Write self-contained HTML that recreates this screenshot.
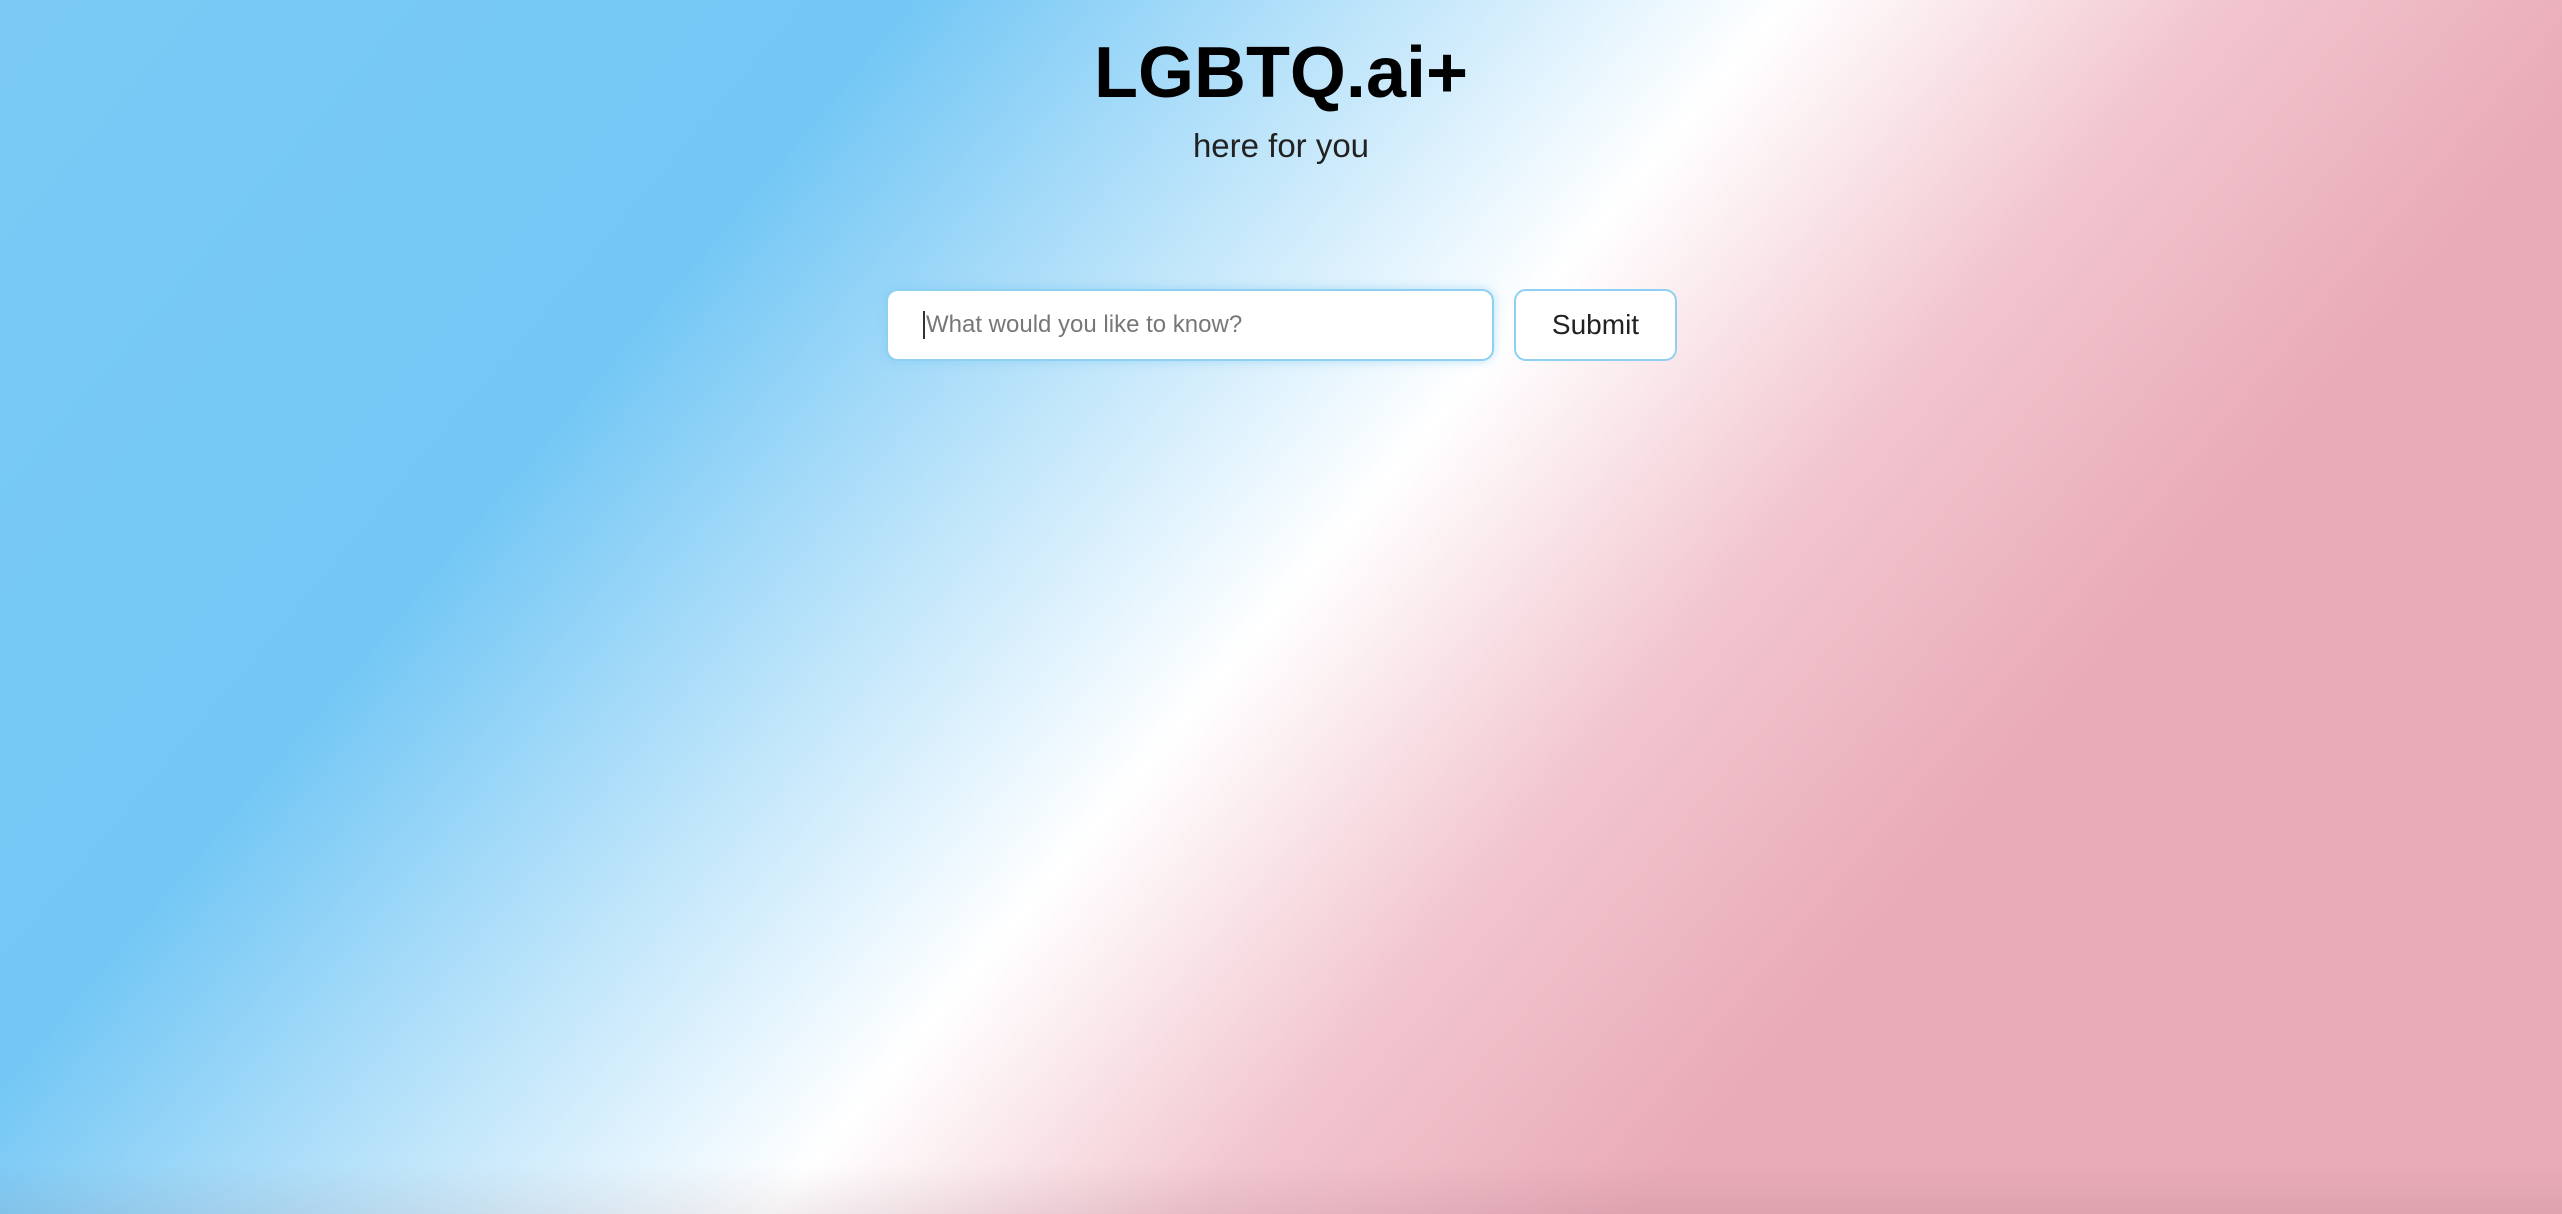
<!DOCTYPE html>
<html><head><meta charset="utf-8"><style>
html,body{margin:0;padding:0;width:2562px;height:1214px;overflow:hidden}
body{background:linear-gradient(130deg,#7acaf5 0%,#74c7f5 25.5%,#ffffff 50%,#f2c6cf 62%,#e9abb8 74%,#e9abb8 100%);font-family:"Liberation Sans",Arial,sans-serif;position:relative}
.shade{position:absolute;left:0;right:0;bottom:0;height:50px;background:linear-gradient(to bottom,rgba(0,0,0,0),rgba(80,40,60,0.07))}
h1{position:absolute;top:28px;left:0;width:2562px;text-align:center;margin:0;font-size:72px;font-weight:bold;color:#000;line-height:90px}
.sub{position:absolute;top:124px;left:0;width:2562px;text-align:center;font-size:33px;color:#222;line-height:44px}
.inp{position:absolute;left:886px;top:289px;width:604px;height:68px;background:#fff;border:2px solid #8fd0f2;border-radius:12px;box-shadow:0 0 10px rgba(116,199,245,0.5)}
.inp span{position:absolute;left:35px;top:20px;font-size:24px;color:#777;border-left:2px solid #333;padding-left:1px;line-height:28px}
.btn{position:absolute;left:1514px;top:289px;width:159px;height:68px;background:#fff;border:2px solid #8fd0f2;border-radius:12px;text-align:center;line-height:68px;font-size:28px;color:#222}
</style></head><body>
<h1>LGBTQ.ai+</h1>
<div class="sub">here for you</div>
<div class="inp"><span>What would you like to know?</span></div>
<div class="btn">Submit</div>
<div class="shade"></div>
</body></html>
